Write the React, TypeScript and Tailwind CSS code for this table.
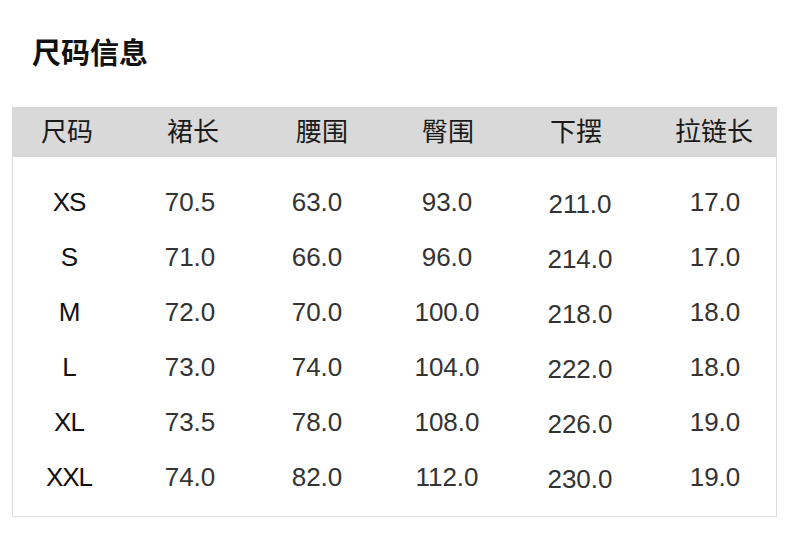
import React from "react";

const rows = [
  ["XS", "70.5", "63.0", "93.0", "211.0", "17.0"],
  ["S", "71.0", "66.0", "96.0", "214.0", "17.0"],
  ["M", "72.0", "70.0", "100.0", "218.0", "18.0"],
  ["L", "73.0", "74.0", "104.0", "222.0", "18.0"],
  ["XL", "73.5", "78.0", "108.0", "226.0", "19.0"],
  ["XXL", "74.0", "82.0", "112.0", "230.0", "19.0"],
];

const headers = ["尺码", "裙长", "腰围", "臀围", "下摆", "拉链长"];

export default function App() {
  return (
    <div
      className="w-[790px] h-[546px] bg-white overflow-hidden"
      style={{ fontFamily: '"Liberation Sans", "Noto Sans CJK SC", sans-serif' }}
    >
      <div className="pt-[34px] pl-[32px] h-[74px]">
        <div className="h-[40px] leading-[40px] text-[29px] font-bold text-[#111]">
          尺码信息
        </div>
      </div>
      <div className="mt-[33px] ml-[12px] w-[765px] border-x border-b border-[#dedede]">
        <div className="grid grid-cols-[110px_142px_116px_136px_120px_140px] h-[50px] bg-[#d9d9d9] -mx-px">
          {headers.map((h, i) => (
            <div
              key={h}
              className={`flex items-center justify-center text-[26px] text-[#1a1a1a] ${i === 5 ? "pl-[16px]" : ""}`}
            >
              {h}
            </div>
          ))}
        </div>
        <div className="pt-[18px] pb-[11px]">
          {rows.map((r) => (
            <div
              key={r[0]}
              className="grid grid-cols-[114px_128px_126px_134px_132px_130px] h-[55px] -ml-px"
            >
              {r.map((c, i) => (
                <div
                  key={i}
                  className={`flex items-center justify-center text-[26px] ${
                    i === 0 ? "text-[#111] text-[25px] tracking-[-1px]" : "text-[#333]"
                  } ${i === 4 ? "pt-[4px]" : ""} ${i === 5 ? "pl-[8px]" : ""}`}
                >
                  {c}
                </div>
              ))}
            </div>
          ))}
        </div>
      </div>
    </div>
  );
}
